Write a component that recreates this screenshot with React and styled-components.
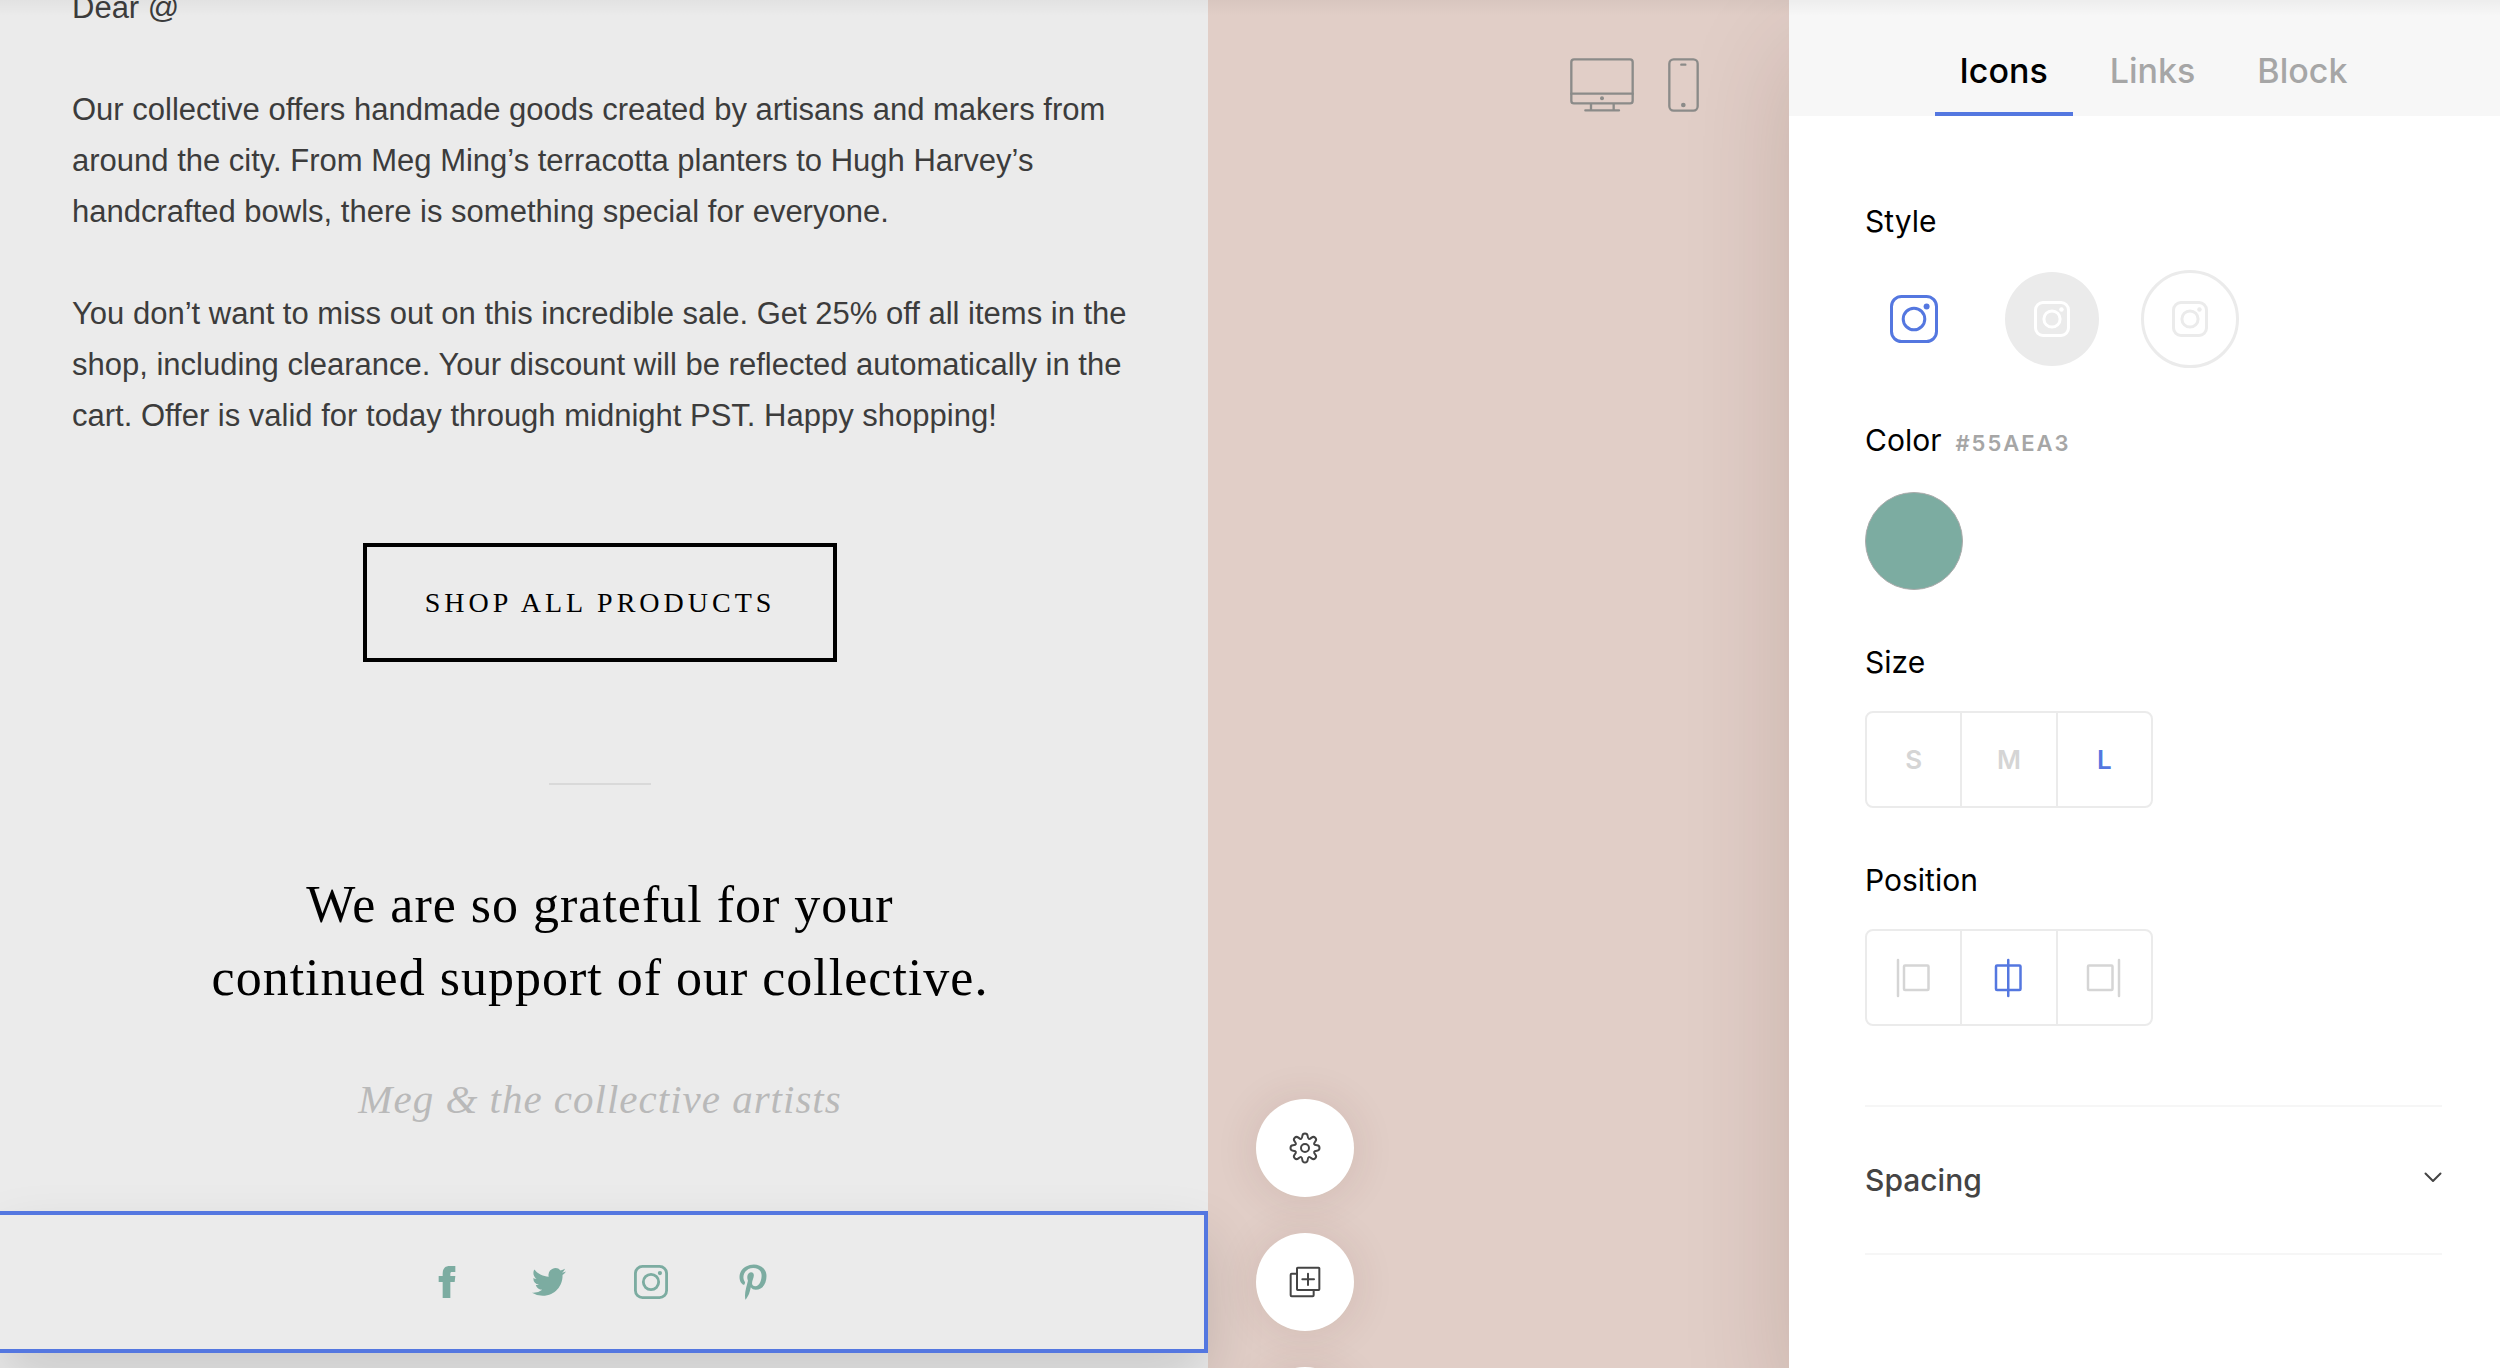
import React, { useState } from 'react'

import styled, { createGlobalStyle } from 'styled-components';
import { FaPinterestP } from 'react-icons/fa';

const BLUE = '#5477e0';
const TEAL = '#7caca1';

const GlobalStyle = createGlobalStyle`
    * { box-sizing: border-box; }

    body {
        margin: 0;
        overflow: hidden;
        font-family: Inter, "Liberation Sans", sans-serif;
        background: white;
    }

    button {
        margin: 0;
        padding: 0;
        border: 0;
        background: none;
        font: inherit;
        cursor: pointer;
    }

    svg { display: block; }
`;

const Page = styled.div`
    display: grid;
    grid-template-columns: minmax(0, 1208fr) minmax(0, 581fr) 711px;
    height: 100vh;
    overflow: hidden;
`;

const TopShade = styled.div`
    position: absolute;
    top: 0;
    left: 0;
    right: 0;
    height: 16px;
    z-index: 3;
    background: linear-gradient(rgba(0, 0, 0, 0.04), rgba(0, 0, 0, 0));
    pointer-events: none;
`;

/* ---------- email ---------- */

const Email = styled.main`
    display: flex;
    flex-direction: column;
    align-items: center;
    height: 100vh;
    background: #ebebeb;
`;

const Letter = styled.div`
    width: 100%;
    margin-top: -18px;
    padding: 0 64px 0 72px;
    color: #3c3c3c;
    font-family: "Liberation Sans", Arial, sans-serif;
    font-size: 31px;
    line-height: 51px;
`;

const Paragraph = styled.p`
    margin: 0 0 51px;
`;

const ShopButton = styled.button`
    margin-top: 51px;
    margin-right: 8px;
    padding: 0 58px;
    height: 119px;
    flex: none;
    border: 4px solid black;
    color: black;
    font-family: "Liberation Serif", "Times New Roman", serif;
    font-size: 28px;
    letter-spacing: 4px;
    text-transform: uppercase;
`;

const Rule = styled.hr`
    width: 102px;
    height: 2px;
    margin: 121px 8px 0 0;
    flex: none;
    border: 0;
    background: #d9d9d9;
`;

const Thanks = styled.h1`
    margin: 83px 8px 0 0;
    color: black;
    font-family: "Liberation Serif", "Times New Roman", serif;
    font-size: 52px;
    font-weight: 400;
    line-height: 73px;
    letter-spacing: 1px;
    text-align: center;
`;

const Signature = styled.p`
    margin: 49px 8px 0 0;
    color: #b9b9b9;
    font-family: "Liberation Serif", "Times New Roman", serif;
    font-size: 41px;
    font-style: italic;
    line-height: 73px;
    letter-spacing: 1px;
`;

const SelectedBlock = styled.section`
    display: flex;
    justify-content: center;
    align-items: center;
    gap: 68px;
    width: 100%;
    height: 142px;
    flex: none;
    margin-top: 75px;
    padding-right: 4px;
    border: 4px solid ${BLUE};
    border-left: 0;
    background: #ebebeb;
    box-shadow: 0 28px 60px rgba(0, 0, 0, 0.14);
    z-index: 1;
`;

const SocialLink = styled.a`
    display: flex;
    justify-content: center;
    align-items: center;
    width: 34px;
    height: 36px;
    color: ${TEAL};
`;

/* ---------- canvas ---------- */

const Canvas = styled.section`
    display: flex;
    flex-direction: column;
    justify-content: space-between;
    height: 100vh;
    background: #e1cec7;
`;

const Devices = styled.div`
    display: flex;
    justify-content: flex-end;
    gap: 34px;
    padding: 58px 90px 0 0;
`;

const DeviceButton = styled.button`
    color: #8b8b89;
`;

// the last button runs off the bottom of the window
const FloatingMenu = styled.div`
    display: flex;
    flex-direction: column;
    gap: 36px;
    margin: 0 0 -97px 48px;
    z-index: 2;
`;

const RoundButton = styled.button`
    display: flex;
    justify-content: center;
    align-items: center;
    width: 98px;
    height: 98px;
    border-radius: 50%;
    background: white;
    color: #444;
    box-shadow: 0 2px 44px rgba(90, 40, 30, 0.12);
`;

/* ---------- sidebar ---------- */

const Sidebar = styled.aside`
    background: white;
    box-shadow: 0 50px 100px rgba(60, 20, 10, 0.16);
    z-index: 2;
`;

const Tabs = styled.nav`
    display: flex;
    justify-content: center;
    gap: 12px;
    height: 116px;
    padding: 0 58px 0 76px;
    background: #f7f7f7;
`;

const Tab = styled.button`
    padding: 28px 25px 0;
    border-bottom: 4px solid ${props => props.$active ? BLUE : 'transparent'};
    color: ${props => props.$active ? 'black' : '#a6a6a6'};
    font-size: 34px;
    font-weight: 500;
`;

const Panel = styled.div`
    display: flex;
    flex-direction: column;
    gap: 54px;
    padding: 87px 58px 0 76px;
`;

const Field = styled.div`
    display: flex;
    flex-direction: column;
    gap: 31px;
`;

const Label = styled.div`
    display: flex;
    align-items: baseline;
    gap: 14px;
    color: black;
    font-size: 30px;
    line-height: 36px;
`;

const Hex = styled.span`
    color: #a6a6a6;
    font-size: 22px;
    font-weight: 600;
    letter-spacing: 2px;
`;

const Choices = styled.div`
    display: flex;
    gap: 40px;
`;

const StyleButton = styled.button`
    display: flex;
    justify-content: center;
    align-items: center;
    width: 98px;
    height: 98px;
    border-radius: 50%;
    border: ${props => props.$outlined ? '3px solid #ebebeb' : '2px solid transparent'};
    background: ${props => props.$filled ? '#ebebeb' : 'none'};
    background-clip: padding-box;
    color: ${props => props.$active ? BLUE : props.$filled ? 'white' : '#ebebeb'};
`;

const Swatch = styled.button`
    width: 98px;
    height: 98px;
    border: 1px solid #aaa;
    border-radius: 50%;
    background: ${TEAL};
`;

const Segments = styled.div`
    display: flex;
    width: 288px;
    height: 97px;
    border: 2px solid #ebebeb;
    border-radius: 8px;
`;

const Segment = styled.button`
    display: flex;
    flex: 1;
    justify-content: center;
    align-items: center;
    color: ${props => props.$active ? BLUE : '#d5d5d5'};
    font-size: 26px;
    font-weight: 600;

    & + & { border-left: 2px solid #ebebeb; }
`;

const Accordion = styled.button`
    display: flex;
    justify-content: space-between;
    align-items: center;
    height: 150px;
    margin-top: 25px;
    border-top: 2px solid #f6f6f6;
    border-bottom: 2px solid #f6f6f6;
    color: #444;
    font-size: 30px;
    font-weight: 500;
`;

/* ---------- icons ---------- */

const Instagram = ({ size, stroke }) => (
    <svg width={size} height={size} viewBox="0 0 48 48" fill="none" stroke="currentColor" strokeWidth={stroke}>
        <rect x={stroke / 2} y={stroke / 2} width={48 - stroke} height={48 - stroke} rx="10" />
        <circle cx="24" cy="24" r="10.8" />
        <circle cx="36.6" cy="11.4" r="3" fill="currentColor" stroke="none" />
    </svg>
)

const Facebook = () => (
    <svg width="18" height="34" viewBox="176 256 54 100" fill="currentColor">
        <path d="M190 354V306H178V288H190V281C190 266 197 258 211 258H228V276H219C214 276 213 278 213 282V288H228L226 306H213V354Z" />
    </svg>
)

const Twitter = () => (
    <svg width="34" height="34" viewBox="0 0 24 24" fill="currentColor">
        <path d="M23.954 4.569a10 10 0 0 1-2.825.775 4.958 4.958 0 0 0 2.163-2.723c-.951.555-2.005.959-3.127 1.184a4.92 4.92 0 0 0-8.384 4.482C7.691 8.094 4.066 6.13 1.64 3.161a4.822 4.822 0 0 0-.666 2.475c0 1.71.87 3.213 2.188 4.096a4.904 4.904 0 0 1-2.228-.616v.061a4.923 4.923 0 0 0 3.946 4.827 4.996 4.996 0 0 1-2.212.085 4.937 4.937 0 0 0 4.604 3.417 9.868 9.868 0 0 1-6.102 2.105c-.39 0-.779-.023-1.17-.067a13.995 13.995 0 0 0 7.557 2.209c9.054 0 13.999-7.496 13.999-13.986 0-.209 0-.42-.015-.63a9.936 9.936 0 0 0 2.46-2.548z" />
    </svg>
)

const Monitor = () => (
    <svg width="64" height="54" viewBox="0 0 192 162" fill="none" stroke="currentColor" strokeWidth="7" strokeLinecap="round">
        <rect x="4" y="4" width="184" height="132" rx="8" />
        <path d="M4 107H188M63 139V154M131 139V154M46 157H147" />
        <circle cx="96" cy="121" r="6" fill="currentColor" stroke="none" />
    </svg>
)

const Phone = () => (
    <svg width="31" height="54" viewBox="0 0 93 162" fill="none" stroke="currentColor" strokeWidth="7" strokeLinecap="round">
        <rect x="4" y="4" width="85" height="154" rx="13" />
        <path d="M40 20H52" />
        <circle cx="46" cy="141" r="7" fill="currentColor" stroke="none" />
    </svg>
)

// one tooth and the valley after it, turned eight times round the centre
const gearPath = () => {
    const turn = (x, y, k) => {
        const a = k * Math.PI / 4;
        return `${(x * Math.cos(a) - y * Math.sin(a)).toFixed(1)} ${(x * Math.sin(a) + y * Math.cos(a)).toFixed(1)}`;
    };
    let d = `M${turn(-8, -36, 0)}`;
    for (let k = 0; k < 8; k++) {
        d += `C${turn(-7, -46, k)} ${turn(7, -46, k)} ${turn(8, -36, k)}`;
        d += `C${turn(9, -26, k)} ${turn(-9, -26, k + 1)} ${turn(-8, -36, k + 1)}`;
    }
    return d + 'Z';
}

const Gear = () => (
    <svg width="32" height="32" viewBox="-48 -48 96 96" fill="none" stroke="currentColor" strokeWidth="6" strokeLinejoin="round">
        <path d={gearPath()} />
        <circle r="12" />
    </svg>
)

const Duplicate = () => (
    <svg width="32" height="32" viewBox="0 0 96 96" fill="none" stroke="currentColor" strokeWidth="6" strokeLinecap="round" strokeLinejoin="round">
        <rect x="24" y="5" width="67" height="67" rx="2" />
        <path d="M23 23H8Q5 23 5 26V88Q5 91 8 91H71Q74 91 74 88V73M57 23V57M40 40H75" />
    </svg>
)

const AlignIcon = ({ box, line }) => (
    <svg width="36" height="40" viewBox="0 0 36 40" fill="none" stroke="currentColor" strokeWidth="2.5" strokeLinecap="round">
        <rect x={box} y="7.5" width="24.5" height="24.5" rx="1" />
        <path d={`M${line} 2V38`} />
    </svg>
)

const Chevron = () => (
    <svg width="18" height="16" viewBox="0 0 18 16" fill="none" stroke="currentColor" strokeWidth="2" strokeLinecap="round" strokeLinejoin="round">
        <path d="M1.5 1.5L9 9L16.5 1.5" />
    </svg>
)

const tabs = ['Icons', 'Links', 'Block'];
const sizes = ['S', 'M', 'L'];
const positions = [
    { name: 'Left', box: 8, line: 2 },
    { name: 'Center', box: 5, line: 17.25 },
    { name: 'Right', box: 2, line: 33 },
];
const iconStyles = ['Plain', 'Filled', 'Outlined'];

export default () => {
    const [tab, setTab] = useState('Icons');
    const [iconStyle, setIconStyle] = useState('Plain');
    const [size, setSize] = useState('L');
    const [position, setPosition] = useState('Center');

    return (
        <Page>
            <GlobalStyle />
            <TopShade />
            <Email>
                <Letter>
                    <Paragraph>Dear @</Paragraph>
                    <Paragraph>
                        Our collective offers handmade goods created by artisans and makers from
                        around the city. From Meg Ming’s terracotta planters to Hugh Harvey’s
                        handcrafted bowls, there is something special for everyone.
                    </Paragraph>
                    <Paragraph>
                        You don’t want to miss out on this incredible sale. Get 25% off all items in the
                        shop, including clearance. Your discount will be reflected automatically in the
                        cart. Offer is valid for today through midnight PST. Happy shopping!
                    </Paragraph>
                </Letter>
                <ShopButton>Shop all products</ShopButton>
                <Rule />
                <Thanks>
                    We are so grateful for your<br />
                    continued support of our collective.
                </Thanks>
                <Signature>Meg &amp; the collective artists</Signature>
                <SelectedBlock>
                    <SocialLink href="#facebook" aria-label="Facebook"><Facebook /></SocialLink>
                    <SocialLink href="#twitter" aria-label="Twitter"><Twitter /></SocialLink>
                    <SocialLink href="#instagram" aria-label="Instagram"><Instagram size={34} stroke={4} /></SocialLink>
                    <SocialLink href="#pinterest" aria-label="Pinterest"><FaPinterestP size={36} /></SocialLink>
                </SelectedBlock>
            </Email>

            <Canvas>
                <Devices>
                    <DeviceButton aria-label="Desktop preview"><Monitor /></DeviceButton>
                    <DeviceButton aria-label="Mobile preview"><Phone /></DeviceButton>
                </Devices>
                <FloatingMenu>
                    <RoundButton aria-label="Block settings"><Gear /></RoundButton>
                    <RoundButton aria-label="Duplicate block"><Duplicate /></RoundButton>
                    <RoundButton aria-label="Delete block" />
                </FloatingMenu>
            </Canvas>

            <Sidebar>
                <Tabs>
                    {
                        tabs.map(name => (
                            <Tab key={name} $active={name === tab} onClick={() => setTab(name)}>{name}</Tab>
                        ))
                    }
                </Tabs>
                <Panel>
                    <Field role="group" aria-labelledby="style-label">
                        <Label id="style-label">Style</Label>
                        <Choices>
                            {
                                iconStyles.map(name => (
                                    <StyleButton
                                        key={name}
                                        aria-label={name}
                                        aria-pressed={name === iconStyle}
                                        $active={name === iconStyle}
                                        $filled={name === 'Filled'}
                                        $outlined={name === 'Outlined'}
                                        onClick={() => setIconStyle(name)}
                                    >
                                        <Instagram size={name === 'Plain' ? 48 : 36} stroke={name === 'Plain' ? 3 : 4} />
                                    </StyleButton>
                                ))
                            }
                        </Choices>
                    </Field>
                    <Field role="group" aria-labelledby="color-label">
                        <Label id="color-label">Color <Hex>#55AEA3</Hex></Label>
                        <Swatch aria-label="Pick a color" />
                    </Field>
                    <Field role="group" aria-labelledby="size-label">
                        <Label id="size-label">Size</Label>
                        <Segments>
                            {
                                sizes.map(name => (
                                    <Segment key={name} aria-pressed={name === size} $active={name === size} onClick={() => setSize(name)}>
                                        {name}
                                    </Segment>
                                ))
                            }
                        </Segments>
                    </Field>
                    <Field role="group" aria-labelledby="position-label">
                        <Label id="position-label">Position</Label>
                        <Segments>
                            {
                                positions.map(({ name, box, line }) => (
                                    <Segment key={name} aria-label={name} aria-pressed={name === position} $active={name === position} onClick={() => setPosition(name)}>
                                        <AlignIcon box={box} line={line} />
                                    </Segment>
                                ))
                            }
                        </Segments>
                    </Field>
                    <Accordion aria-expanded="false">
                        Spacing
                        <Chevron />
                    </Accordion>
                </Panel>
            </Sidebar>
        </Page>
    )
}
